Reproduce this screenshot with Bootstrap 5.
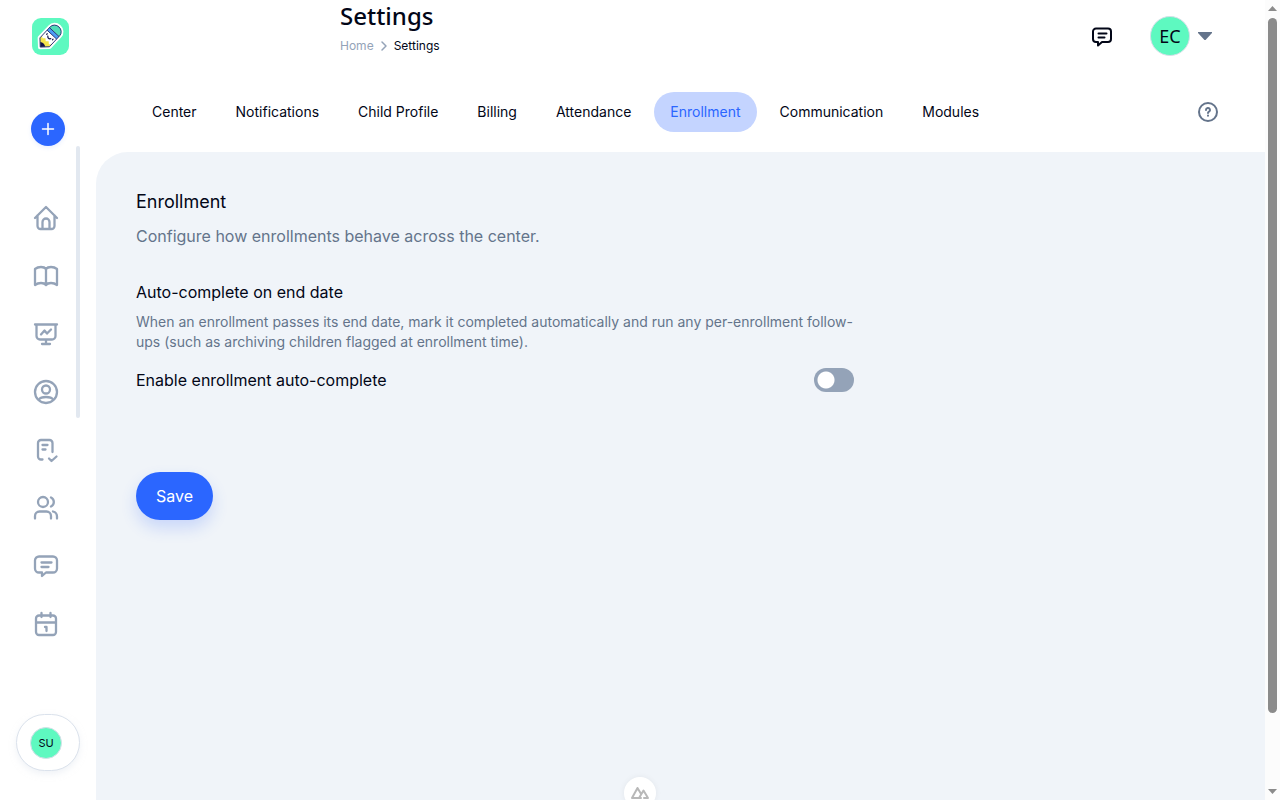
<!DOCTYPE html>
<html lang="en">
<head>
<meta charset="utf-8">
<meta name="viewport" content="width=device-width, initial-scale=1">
<title>Settings</title>
<link href="https://cdn.jsdelivr.net/npm/bootstrap@5.3.0/dist/css/bootstrap.min.css" rel="stylesheet">
<style>
  body { font-family: Inter, "Noto Sans", sans-serif; font-size: 16px; line-height: 24px; color: #020617; background: #fff; }
  a { text-decoration: none; }
  .ic { width: 24px; height: 24px; display: block; fill: none; stroke: currentColor; stroke-width: 2; stroke-linecap: round; stroke-linejoin: round; overflow: visible; }
  .sidebar { width: 96px; padding: 18px 16px 29px; }
  .logo { width: 37px; height: 37px; margin-left: 16px; display: block; }
  .add-btn { width: 34px; height: 34px; margin: 57px 0 0 15px; background: #2b66ff; border: 0; color: #fff; box-shadow: 0 2px 4px #2b66ff1a; }
  .add-btn svg { width: 12px; height: 12px; stroke-width: 3; }
  .side-list { width: 60px; padding-top: 43px; }
  .side-list a { height: 58px; color: #94a3b8; }
  .side-list svg { stroke-width: 2.3; }
  .side-thumb { width: 4px; height: 272px; border-radius: 4px; background: #e2e8f0; }
  .account { width: 64px; height: 57px; padding: 0 4px 0 0; border: 1px solid #dbe2ec; border-radius: 32px; background: #fff; box-shadow: 0 3px 6px #e2e8f080; }
  .avatar { background: #5ef9c0; border: 1px solid #d5dfe8; color: #020617; }
  .avatar-sm { width: 32px; height: 32px; font-size: 11px; line-height: 16px; }
  .avatar-lg { width: 40px; height: 40px; font: 18px/24px "Noto Sans", sans-serif; }
  .topbar { height: 72px; padding: 0 53px 0 244px; }
  .topbar h1 { font: 500 24px/32px "Noto Sans", sans-serif; margin: 0; }
  .crumbs { font-size: 12px; line-height: 16px; margin-top: 6px; }
  .crumbs a { color: #94a3b8; }
  .crumbs svg { width: 8px; height: 10px; margin: 0 6px; color: #94a3b8; }
  .tools { gap: 36px; }
  .plain { border: 0; background: none; padding: 0; color: inherit; }
  .caret { width: 14px; height: 8px; fill: #64748b; display: block; }
  .tabs { padding: 20px 45px 20px 40px; gap: 7px; }
  .tabs .tab { font-size: 14px; line-height: 20px; padding: 10px 16px; border-radius: 20px; color: #020617; white-space: nowrap; }
  .tabs .active { background: #c4d4ff; color: #2b66ff; }
  .help { color: #64748b; }
  .panel { background: #f0f4f9; border-top-left-radius: 32px; padding: 36px 40px; }
  .panel form { max-width: 718px; }
  .panel h2 { font-size: 18px; line-height: 28px; font-weight: 400; margin: 0 0 8px; }
  .panel h3 { font-size: 16px; line-height: 24px; font-weight: 400; margin: 32px 0 8px; }
  .muted { color: #64748b; margin: 0; }
  .desc { font-size: 14px; line-height: 20px; }
  .toggle.form-check-input { width: 40px; height: 24px; margin: 0; border: 0; background-color: #94a3b8; background-size: 24px 24px; background-position: left center; border-radius: 12px; background-image: radial-gradient(circle at 12px 12px, #fff 8px, transparent 9px); background-repeat: no-repeat; }
  .toggle.form-check-input:checked { background-color: #2b66ff; background-position: right center; }
  .save { width: 77px; height: 48px; margin-top: 80px; border: 0; border-radius: 24px; background: #2b66ff; color: #fff; box-shadow: 0 8px 16px #2b66ff33; }
  .dev-badge { left: 50%; bottom: -9px; width: 32px; height: 32px; margin-left: -16px; background: #fff; box-shadow: 0 0 6px #0000000f; }
  .dev-badge svg { width: 18px; height: 12px; color: #b8b8b8; }
  .scroller { width: 15px; background: #fcfcfc; padding: 6px 3px; }
  .scroller svg { width: 9px; height: 5px; fill: #8b8b8b; display: block; }
  .scroller .thumb { width: 9px; height: 695px; border-radius: 5px; background: #8b8b8b; margin-top: 7px; }
</style>
</head>
<body>
<div class="d-flex vh-100 overflow-hidden">
  <aside class="sidebar d-flex flex-column flex-shrink-0">
    <a href="#" aria-label="Home page">
      <svg class="logo" viewBox="0 0 37 37">
        <rect width="37" height="37" rx="9" fill="#5ef9c0"/>
        <g transform="translate(19.500 17) rotate(43)">
          <path id="pencil" d="M-6.500 -5a6.500 6 0 0 1 13 0V10L0 16.500L-6.500 10z" fill="#fff" stroke="#fff" stroke-width="4.500" stroke-linejoin="round"/>
          <path d="M-6.500 -4v-1a6.500 6 0 0 1 13 0v1z" fill="#4fdcb8"/>
          <path d="M-6.500 -4h13v3.500h-13z" fill="#4a9cf5"/>
          <path d="M-6.500 7l2.200 1.500L-2.200 6.500 0 8.500l2.200-2 2.100 2L6.500 7v3L0 16.500-6.500 10z" fill="#f5e44c"/>
          <path d="M-3.500 12.800Q0 10.500 3.500 12.800L0 16.500z" fill="#151449"/>
          <path d="M-6.500 -5a6.500 6 0 0 1 13 0V10L0 16.500L-6.500 10zM-6.500-4h13M-6.500-.5h13" fill="none" stroke="#26306f" stroke-width=".9"/>
          <path d="M-2 3.200q2 2.600 4 0M-4 2v.8M4 2v.8" fill="none" stroke="#151449" stroke-width="1.200" stroke-linecap="round"/>
        </g>
      </svg>
    </a>
    <button type="button" class="add-btn rounded-circle d-flex align-items-center justify-content-center p-0" aria-label="Add">
      <svg class="ic" viewBox="0 0 24 24"><path d="M12 1v22M1 12h22"/></svg>
    </button>
    <nav class="d-flex" aria-label="Main">
      <div class="side-list d-flex flex-column">
        <a href="#" class="d-flex align-items-center justify-content-center" aria-label="Home"><svg class="ic" viewBox="0 0 24 24"><path d="M1 12L12 1l11 11M3.500 9.500V20a3 3 0 0 0 3 3h11a3 3 0 0 0 3-3V9.500M8.500 23v-7a3.500 3.500 0 0 1 7 0v7"/></svg></a>
        <a href="#" class="d-flex align-items-center justify-content-center" aria-label="Learning"><svg class="ic" viewBox="0 0 24 24"><path d="M12 5Q10.500 3 7 3T1 5v16q2.500-2 6-2t5 2zM12 5q1.500-2 5-2t6 2v16q-2.500-2-6-2t-5 2z"/></svg></a>
        <a href="#" class="d-flex align-items-center justify-content-center" aria-label="Reports"><svg class="ic" viewBox="0 0 24 24"><path d="M1 2.500h22M2.500 2.500V14a3.500 3.500 0 0 0 3.500 3.500h12a3.500 3.500 0 0 0 3.500-3.500V2.500M12 17.500V22M8 22h8M7 12.500l3.500-4 2.500 3 4-4"/></svg></a>
        <a href="#" class="d-flex align-items-center justify-content-center" aria-label="Profile"><svg class="ic" viewBox="0 0 24 24"><circle cx="12" cy="12" r="11"/><circle cx="12" cy="9.500" r="4"/><path d="M5 19.500q1.500-2.500 7-2.500t7 2.500"/></svg></a>
        <a href="#" class="d-flex align-items-center justify-content-center" aria-label="Tasks"><svg class="ic" viewBox="0 0 24 24"><path d="M8.500 21.500H7a3 3 0 0 1-3-3V5a3 3 0 0 1 3-3h8.500a3 3 0 0 1 3 3v9M8.500 7h5M8.500 11.500h3M15 20.500l2.500 2.500 5-4.500"/></svg></a>
        <a href="#" class="d-flex align-items-center justify-content-center" aria-label="Families"><svg class="ic" viewBox="0 0 24 24"><circle cx="9" cy="6" r="5"/><path d="M1 22.500V20a4.500 4.500 0 0 1 4.500-4.500h7A4.500 4.500 0 0 1 17 20v2.500M17 1.500a5 5 0 0 1 0 9M19 15.500q4 1 4 5v2"/></svg></a>
        <a href="#" class="d-flex align-items-center justify-content-center" aria-label="Messages"><svg class="ic" viewBox="0 0 24 24"><path d="M5 2.500h14a4 4 0 0 1 4 4v8a4 4 0 0 1-4 4h-7l-4 3.500V18.500H5a4 4 0 0 1-4-4v-8a4 4 0 0 1 4-4zM7.500 8.500h10M7.500 13h7"/></svg></a>
        <a href="#" class="d-flex align-items-center justify-content-center" aria-label="Calendar"><svg class="ic" viewBox="0 0 24 24"><path d="M5 3.500h14a3 3 0 0 1 3 3V20a3 3 0 0 1-3 3H5a3 3 0 0 1-3-3V6.500a3 3 0 0 1 3-3zM2 10.500h20M7.500 1v4M16.500 1v4M11 15h1.500v4"/></svg></a>
      </div>
      <div class="side-thumb"></div>
    </nav>
    <button type="button" class="account mt-auto d-flex align-items-center justify-content-center">
      <span class="avatar avatar-sm rounded-circle d-flex align-items-center justify-content-center">SU</span>
    </button>
  </aside>

  <div class="flex-grow-1 d-flex flex-column overflow-hidden">
    <header class="topbar d-flex justify-content-between">
      <div>
        <h1>Settings</h1>
        <nav class="crumbs d-flex align-items-center" aria-label="Breadcrumb">
          <a href="#">Home</a>
          <svg class="ic" viewBox="0 0 8 10"><path d="M2 1l4 4-4 4" stroke-width="1.500"/></svg>
          <span>Settings</span>
        </nav>
      </div>
      <div class="d-flex align-items-center tools">
        <button type="button" class="plain" aria-label="Messages"><svg class="ic" viewBox="0 0 24 24"><path d="M6 4.500h12a3 3 0 0 1 3 3V15a3 3 0 0 1-3 3h-6l-4 3.500V18H6a3 3 0 0 1-3-3V7.500a3 3 0 0 1 3-3zM8.500 9.500h8M8.500 13.500h6"/></svg></button>
        <button type="button" class="plain d-flex align-items-center gap-2">
          <span class="avatar avatar-lg rounded-circle d-flex align-items-center justify-content-center">EC</span>
          <svg class="caret" viewBox="0 0 14 8"><path d="M0 0h14v1L8 7.500q-1 1-2 0L0 1z"/></svg>
        </button>
      </div>
    </header>
    <nav class="tabs d-flex align-items-center" aria-label="Settings sections">
      <a class="tab" href="#">Center</a>
      <a class="tab" href="#">Notifications</a>
      <a class="tab" href="#">Child Profile</a>
      <a class="tab" href="#">Billing</a>
      <a class="tab" href="#">Attendance</a>
      <a class="tab active" href="#" aria-current="page">Enrollment</a>
      <a class="tab" href="#">Communication</a>
      <a class="tab" href="#">Modules</a>
      <button type="button" class="plain help ms-auto" aria-label="Help"><svg class="ic" viewBox="0 0 24 24"><circle cx="12" cy="12" r="9"/><path d="M10 10a2 2 0 1 1 3 1.700q-1 .5-1 1.300M12 15.500v.2"/></svg></button>
    </nav>
    <main class="panel flex-grow-1">
      <form>
        <h2>Enrollment</h2>
        <p class="muted">Configure how enrollments behave across the center.</p>
        <h3>Auto-complete on end date</h3>
        <p class="muted desc">When an enrollment passes its end date, mark it completed automatically and run any per-enrollment follow-ups (such as archiving children flagged at enrollment time).</p>
        <div class="d-flex align-items-center justify-content-between mt-3">
          <label for="auto">Enable enrollment auto-complete</label>
          <input class="form-check-input toggle" type="checkbox" role="switch" id="auto">
        </div>
        <button type="button" class="save">Save</button>
      </form>
    </main>
  </div>

  <div class="scroller d-flex flex-column flex-shrink-0" aria-hidden="true">
    <svg viewBox="0 0 9 5"><path d="M0 5L4.500 0 9 5z"/></svg>
    <div class="thumb"></div>
    <svg class="mt-auto" viewBox="0 0 9 5"><path d="M0 0h9L4.500 5z"/></svg>
  </div>
</div>
<div class="dev-badge position-fixed rounded-circle d-flex align-items-center justify-content-center">
  <svg class="ic" viewBox="0 0 18 12"><path d="M10 11H1L6.500 1l3 5M8 11l4.500-7.500L17 11h-4"/></svg>
</div>
<script src="https://cdn.jsdelivr.net/npm/bootstrap@5.3.0/dist/js/bootstrap.bundle.min.js"></script>
</body>
</html>
